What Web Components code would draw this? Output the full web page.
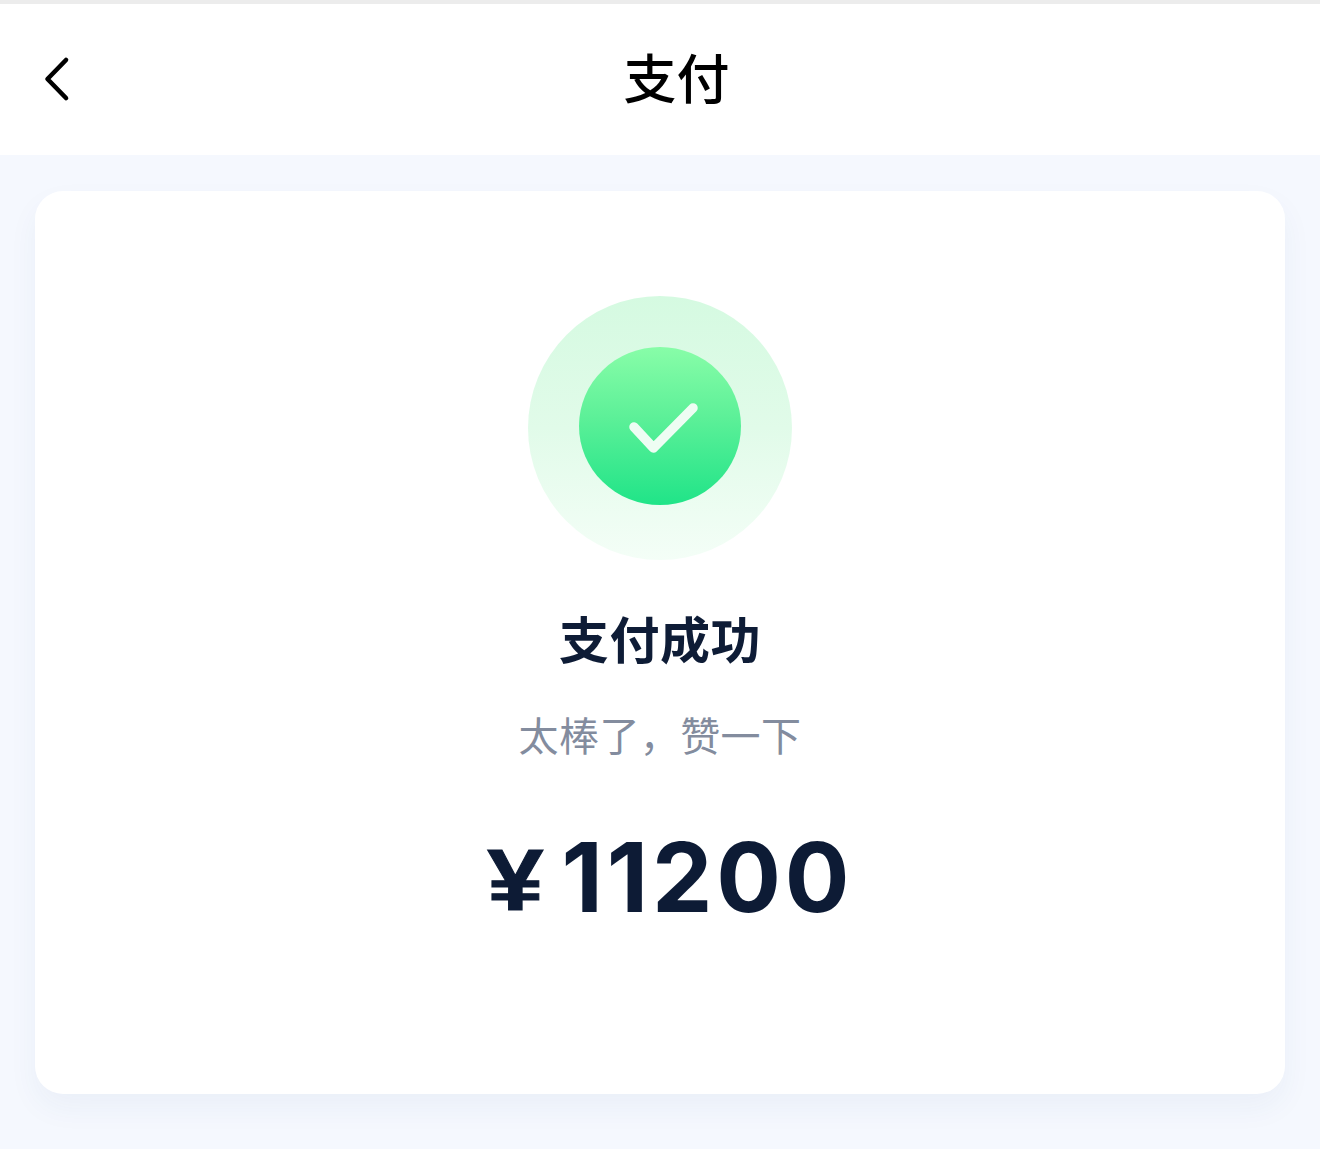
<!DOCTYPE html>
<html lang="zh">
<head>
<meta charset="utf-8">
<title>支付</title>
<style>
  html, body { margin: 0; height: 100%; }
  body { background: #f5f8fe; font-family: Inter, "Noto Sans CJK SC", sans-serif; overflow: hidden; }
</style>
</head>
<body>
<pay-header>支付</pay-header>
<pay-result title-text="支付成功" note="太棒了，赞一下" amount="11200"></pay-result>

<script>
class PayHeader extends HTMLElement {
  connectedCallback() {
    this.attachShadow({ mode: 'open' });
    this.shadowRoot.innerHTML = `
      <style>
        :host { display: block; border-top: 4px solid #ececec; background: #fff; }
        .bar {
          height: 151px;
          display: flex;
          align-items: center;
          justify-content: center;
          position: relative;
          box-sizing: border-box;
          padding-bottom: 6px;
        }
        h1 {
          margin: 0 0 0 33px;
          font: 500 53px/1 "Noto Sans CJK SC", sans-serif;
          color: #000;
        }
        svg { position: absolute; left: 40px; top: 48px; }
      </style>
      <div class="bar">
        <svg width="34" height="54" viewBox="0 0 34 54" fill="none" stroke="#000" stroke-width="4.6" stroke-linecap="round" stroke-linejoin="round">
          <path d="M26 8 L7.500 27 L26 46"/>
        </svg>
        <h1><slot></slot></h1>
      </div>
    `;
  }
}
customElements.define('pay-header', PayHeader);

class PayBadge extends HTMLElement {
  connectedCallback() {
    this.attachShadow({ mode: 'open' });
    this.shadowRoot.innerHTML = `
      <style>
        :host { display: block; width: 264px; height: 264px; }
        .halo {
          width: 264px;
          height: 264px;
          box-sizing: border-box;
          padding-top: 51px;
          border-radius: 50%;
          background: linear-gradient(180deg, #d5fae1 0%, #e1fbe9 50%, #f4fef7 100%);
        }
        .dot {
          width: 162px;
          height: 158px;
          margin: 0 auto;
          border-radius: 50%;
          background: linear-gradient(180deg, #88fda8 0%, #5cf098 45%, #20e488 100%);
          display: flex;
          align-items: center;
          justify-content: center;
        }
      </style>
      <div class="halo">
        <div class="dot">
          <svg width="80" height="56" viewBox="0 0 80 56" fill="none" stroke="#eefdf3" stroke-width="9.500" stroke-linecap="round" stroke-linejoin="round">
            <path d="M14 29 L33.500 50 L73 10"/>
          </svg>
        </div>
      </div>
    `;
  }
}
customElements.define('pay-badge', PayBadge);

class PayResult extends HTMLElement {
  connectedCallback() {
    this.attachShadow({ mode: 'open' });
    this.shadowRoot.innerHTML = `
      <style>
        :host { display: block; padding: 36px 35px 0; }
        .card {
          height: 903px;
          box-sizing: border-box;
          padding-top: 105px;
          background: #fff;
          border-radius: 28px;
          box-shadow: 0 14px 30px rgba(40, 70, 140, 0.05);
          display: flex;
          flex-direction: column;
          align-items: center;
        }
        h2 {
          margin: 46px 0 0;
          font: 700 50px/62px "Noto Sans CJK SC", sans-serif;
          letter-spacing: 0.5px;
          color: #0e1c36;
        }
        p {
          margin: 41px 0 0;
          font: 400 40px/50px "Noto Sans CJK SC", sans-serif;
          letter-spacing: 0.4px;
          color: #838c9e;
        }
        .amount {
          margin: 60px 0 0 24px;
          font: 700 96px/116px Inter, "Noto Sans CJK SC", sans-serif;
          letter-spacing: 3.800px;
          color: #0d1b35;
          display: flex;
          align-items: baseline;
          gap: 22px;
        }
        .yen {
          font: 700 88px/116px "Liberation Sans", sans-serif;
          letter-spacing: 0;
          -webkit-text-stroke: 1px #0d1b35;
          transform: scaleX(1.15) translateY(-2px);
        }
      </style>
      <div class="card">
        <pay-badge></pay-badge>
        <h2>${this.getAttribute('title-text')}</h2>
        <p>${this.getAttribute('note')}</p>
        <div class="amount"><span class="yen">¥</span><span>${this.getAttribute('amount')}</span></div>
      </div>
    `;
  }
}
customElements.define('pay-result', PayResult);
</script>
</body>
</html>
